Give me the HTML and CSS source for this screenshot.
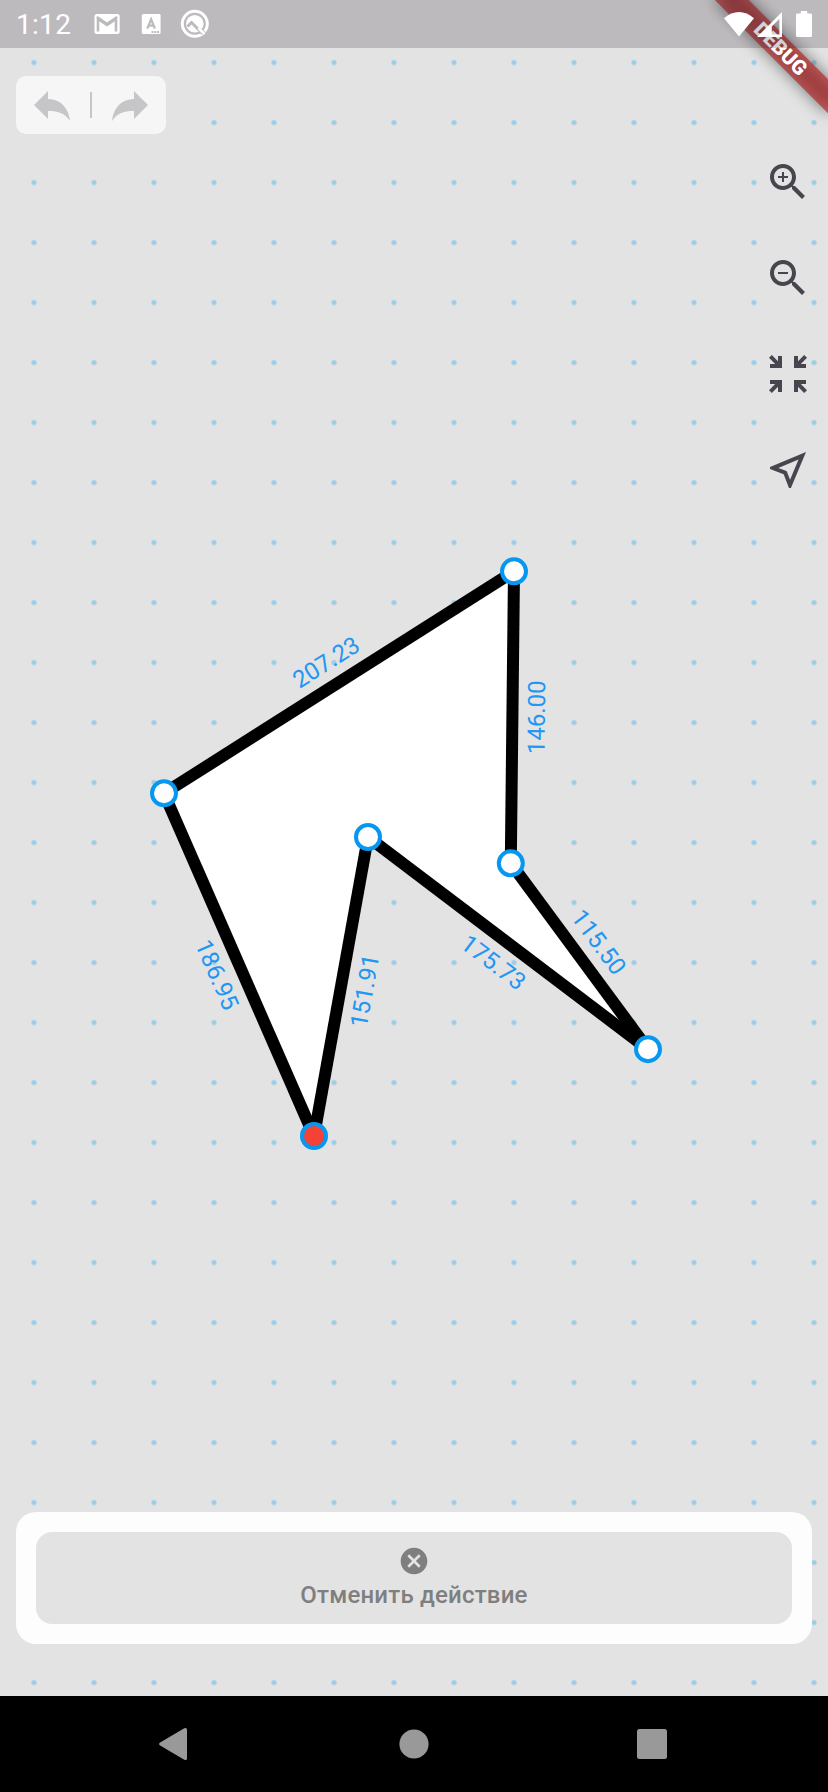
FILE: index.html
```html
<!DOCTYPE html>
<html lang="ru">
<head>
<meta charset="utf-8">
<title>Редактор</title>
<link rel="stylesheet" href="styles.css">
</head>
<body>
<div class="screen">
  <svg class="canvas" width="828" height="1696" viewBox="0 0 828 1696">
    <defs>
      <pattern id="grid" x="4" y="32.5" width="60" height="60" patternUnits="userSpaceOnUse">
        <circle class="grid-dot" cx="30" cy="30" r="2.6"/>
      </pattern>
    </defs>
    <rect y="48" width="828" height="1648" fill="url(#grid)"/>
    <path class="shape" d="M164 793.3 514 571.3 510.8 863.3 648 1049.2 368 837 314 1136Z"/>
    <g class="edges">
      <path d="M164 793.3 514 571.3"/><path d="M514 571.3 510.8 863.3"/><path d="M510.8 863.3 648 1049.2"/>
      <path d="M648 1049.2 368 837"/><path d="M368 837 314 1136"/><path d="M314 1136 164 793.3"/>
    </g>
    <g class="lengths">
      <text y="8.5" transform="translate(326 662) rotate(-32.4)">207.23</text>
      <text y="8.5" transform="translate(536.3 717.3) rotate(-89.4)">146.00</text>
      <text y="8.5" transform="translate(598.9 942) rotate(53.6)">115.50</text>
      <text y="8.5" transform="translate(493.5 962.3) rotate(37.2)">175.73</text>
      <text y="8.5" transform="translate(364.6 990.8) rotate(-79.8)">151.91</text>
      <text y="8.5" transform="translate(217.2 974.6) rotate(66.4)">186.95</text>
    </g>
    <g class="nodes">
      <circle cx="164" cy="793.3" r="12"/><circle cx="514" cy="571.3" r="12"/><circle cx="510.8" cy="863.3" r="12"/>
      <circle cx="648" cy="1049.2" r="12"/><circle cx="368" cy="837" r="12"/><circle class="active" cx="314" cy="1136" r="12"/>
    </g>
  </svg>

  <div class="ui">
    <header class="status">
      <span class="clock">1:12</span>
      <svg class="notices" width="104" height="48" viewBox="92 0 104 48">
        <rect x="94.5" y="14" width="25.2" height="20" rx="2.5" fill="#fff"/>
        <path d="M98 31.5V19L107 25l9-6V31.5" fill="none" stroke="#bdbbbe" stroke-width="2.6"/>
        <path d="M97 16.8 107 23.5 117 16.8" fill="none" stroke="#bdbbbe" stroke-width="2"/>
        <rect x="141.8" y="14" width="18.8" height="20" rx="1.5" fill="#fff"/>
        <path d="M147.3 28.6 151.1 19.3 154.9 28.6M148.8 25.6H153.4" fill="none" stroke="#bdbbbe" stroke-width="2.3"/>
        <path d="M151.5 32H159" stroke="#bdbbbe" stroke-width="2" stroke-dasharray="2 .8"/>
      </svg>
      <svg class="quick" width="30" height="48" viewBox="180 0 30 48">
        <circle cx="194.8" cy="23.8" r="12.5" fill="none" stroke="#fff" stroke-width="3"/>
        <circle cx="194.8" cy="23.8" r="8.8" fill="#fff"/>
        <path d="M187.5 26.5 191.5 22.5 203 34" fill="none" stroke="#bdbbbe" stroke-width="3"/>
        <path d="M201 29 206.5 34.5" stroke="#bdbbbe" stroke-width="2.2"/>
        <path d="M198.5 28 204.5 34" stroke="#fff" stroke-width="2.8"/>
      </svg>
      <svg class="signals" width="92" height="48" viewBox="722 0 92 48">
        <path d="M724 18.3Q739 5.5 754 18.3L739 36.4Z" fill="#fff"/>
        <path fill-rule="evenodd" d="M757 37 782 12V37ZM771.8 26.4V34.4H779.4V18.8Z" fill="#fff"/>
        <path d="M800.8 11h6.4v2.6h3.4q1.4 0 1.4 1.4v20.6q0 1.4-1.4 1.4h-13.2q-1.4 0-1.4-1.4V15q0-1.4 1.4-1.4h3.4Z" fill="#fff"/>
      </svg>
    </header>

    <main class="workspace">
      <div class="history">
        <svg width="36" height="30" viewBox="0 0 36 30"><path d="M0 14 14 0V8C27 8.2 34.5 17 36 30 31 22.5 25 20 14 20V28Z"/></svg>
        <span class="divider"></span>
        <svg width="36" height="30" viewBox="0 0 36 30"><path d="M36 14 22 0V8C9 8.2 1.5 17 0 30 5 22.5 11 20 22 20V28Z"/></svg>
      </div>
      <div class="tools">
        <svg viewBox="0 0 24 24"><path d="M15.5 14h-.79l-.28-.27C15.41 12.59 16 11.11 16 9.5 16 5.91 13.09 3 9.5 3S3 5.91 3 9.5 5.91 16 9.5 16c1.61 0 3.09-.59 4.23-1.57l.27.28v.79l5 4.99L20.49 19l-4.99-5zm-6 0C7.01 14 5 11.99 5 9.5S7.01 5 9.5 5 14 7.01 14 9.5 11.99 14 9.5 14zM12 10h-2v2H9v-2H7V9h2V7h1v2h2v1z"/></svg>
        <svg viewBox="0 0 24 24"><path d="M15.5 14h-.79l-.28-.27C15.41 12.59 16 11.11 16 9.5 16 5.91 13.09 3 9.5 3S3 5.91 3 9.5 5.91 16 9.5 16c1.61 0 3.09-.59 4.23-1.57l.27.28v.79l5 4.99L20.49 19l-4.99-5zm-6 0C7.01 14 5 11.99 5 9.5S7.01 5 9.5 5 14 7.01 14 9.5 11.99 14 9.5 14zM7 9h5v1H7z"/></svg>
        <svg viewBox="0 0 24 24"><path d="M9 9V3H7v2.59L3.91 2.5 2.5 3.91 5.59 7H3v2h6zM21 9V7h-2.59l3.09-3.09-1.41-1.41L17 5.59V3h-2v6h6zM3 15v2h2.59L2.5 20.09l1.41 1.41L7 18.41V21h2v-6H3zM15 15v6h2v-2.59l3.09 3.09 1.41-1.41L18.41 17H21v-2h-6z"/></svg>
        <svg viewBox="0 0 24 24"><path d="M17.27 6.73l-4.24 10.13-1.32-3.42-.32-.83-.82-.32-3.43-1.33 10.13-4.23M21 3L3 10.53v.98l6.84 2.65L12.48 21h.98L21 3z"/></svg>
      </div>
    </main>

    <section class="panel">
      <div class="cancel">
        <svg width="32" height="32" viewBox="0 0 24 24"><path d="M12 2C6.47 2 2 6.47 2 12s4.47 10 10 10 10-4.47 10-10S17.53 2 12 2zm5 13.59L15.59 17 12 13.41 8.41 17 7 15.59 10.59 12 7 8.41 8.41 7 12 10.59 15.59 7 17 8.41 13.41 12 17 15.59z"/></svg>
        <span class="cancel-label">Отменить действие</span>
      </div>
    </section>

    <nav class="navbar">
      <svg width="32" height="36" viewBox="4 0 32 36"><path d="M3.7 16.7 28.3 2.2Q31 1.4 31 3.6V32.4Q31 34.6 28.3 33.8L3.7 19.3Q2.3 18 3.7 16.7Z"/></svg>
      <svg width="32" height="36" viewBox="0 0 32 36"><circle cx="16" cy="18" r="14.6"/></svg>
      <svg width="32" height="36" viewBox="0 0 32 36"><rect x="1" y="3" width="30" height="30" rx="2.5"/></svg>
    </nav>
  </div>

  <svg class="banner" width="180" height="180" viewBox="648 0 180 180">
    <defs><filter id="soft" x="-50%" y="-150%" width="200%" height="400%"><feGaussianBlur stdDeviation="7.9"/></filter></defs>
    <g transform="translate(828 0) rotate(45)">
      <rect x="-80" y="56" width="160" height="24" fill="#000" fill-opacity=".5" filter="url(#soft)"/>
      <rect x="-80" y="56" width="160" height="24" fill="#b71c1c" fill-opacity=".627"/>
      <text class="banner-text" x="1" y="75">DEBUG</text>
    </g>
  </svg>
</div>
</body>
</html>
```
FILE: styles.css
```css
body {
  margin: 0;
  background: #e3e3e3;
  font-family: Roboto, sans-serif;
}
.screen {
  position: relative;
  width: 828px;
  height: 1792px;
  overflow: hidden;
  isolation: isolate;
}
svg { display: block; }
.canvas {
  position: absolute;
  inset: 0 auto auto 0;
  z-index: 0;
}
.grid-dot { fill: #9ecde8; }
.shape { fill: #fff; }
.edges { stroke: #000; stroke-width: 12; }
.lengths {
  fill: #2196f3;
  font-size: 24px;
  text-anchor: middle;
}
.nodes { fill: #fdfdfd; stroke: #0698f0; stroke-width: 4; }
.nodes .active { fill: #f44336; }

.ui {
  display: flex;
  flex-direction: column;
  height: 100%;
}
.status {
  position: relative;
  z-index: 3;
  display: flex;
  align-items: center;
  box-sizing: border-box;
  height: 48px;
  padding-right: 14px;
  padding-left: 16px;
  background: rgb(42 30 46 / 20.5%);
  color: #fff;
}
.clock {
  width: 76px;
  padding-top: 2px;
  font-size: 28px;
  line-height: 48px;
  letter-spacing: .3px;
}
.notices { margin-right: -16px; }
.signals { margin-left: auto; }

.workspace {
  position: relative;
  z-index: 1;
  display: flex;
  flex: 1;
  align-items: flex-start;
  justify-content: space-between;
  padding: 28px 16px 0;
}
.history {
  display: flex;
  align-items: center;
  justify-content: space-between;
  box-sizing: border-box;
  width: 150px;
  height: 58px;
  padding: 0 18px;
  border-radius: 10px;
  background: #f6f6f6;
  fill: #c6c6c8;
}
.history svg { margin-top: 2px; }
.divider {
  width: 2px;
  height: 26px;
  background: #c6c6c8;
}
.tools {
  display: flex;
  flex-direction: column;
  gap: 48px;
  padding-top: 82px;
  fill: #49454f;
}
.tools svg { width: 48px; height: 48px; }

.panel {
  position: relative;
  z-index: 1;
  margin: 0 16px 52px;
  padding: 20px;
  border-radius: 20px;
  background: #fdfdfd;
}
.cancel {
  display: flex;
  flex-direction: column;
  align-items: center;
  box-sizing: border-box;
  height: 92px;
  padding-top: 13px;
  border-radius: 16px;
  background: #e3e3e3;
  color: #7f7f7f;
  fill: #7f7f7f;
}
.cancel-label {
  margin-top: 4px;
  font-size: 24px;
  font-weight: 500;
  line-height: 28px;
  letter-spacing: .2px;
}

.navbar {
  position: relative;
  z-index: 1;
  display: flex;
  align-items: center;
  justify-content: center;
  gap: 206px;
  height: 96px;
  background: #000;
  fill: #999;
}
.navbar svg { overflow: visible; }

.banner {
  position: absolute;
  top: 0;
  right: 0;
  z-index: 2;
}
.banner-text {
  fill: #fff;
  font-size: 20.4px;
  font-weight: 900;
  text-anchor: middle;
}
```
